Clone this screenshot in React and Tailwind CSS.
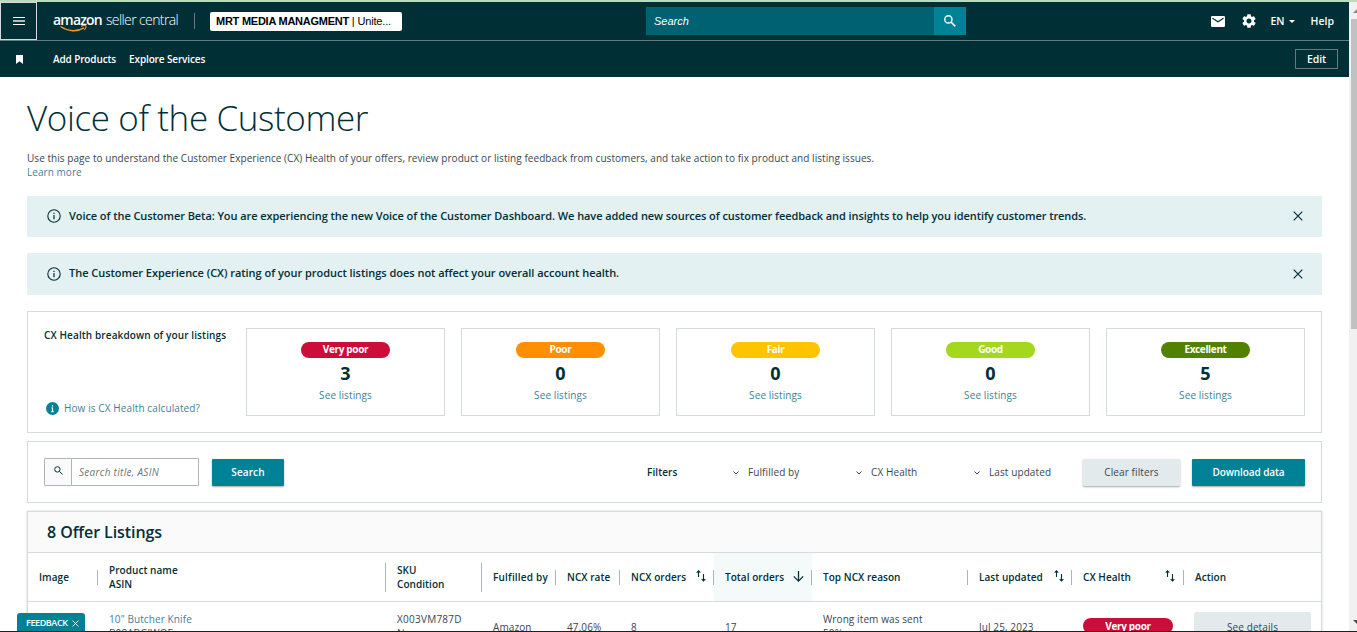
import React from "react";

const INFO_LINK = "text-[#3f8198]";

const RATINGS = [
  { label: "Very poor", count: 3, color: "bg-[#cc0c39]" },
  { label: "Poor", count: 0, color: "bg-[#ff8f00]" },
  { label: "Fair", count: 0, color: "bg-[#ffc400]" },
  { label: "Good", count: 0, color: "bg-[#a3d81f]" },
  { label: "Excellent", count: 5, color: "bg-[#508200]" },
];

const GRID =
  "grid grid-cols-[70px_288px_96px_74px_64px_94px_98px_156px_104px_112px_1fr]";

function SearchIcon({ className }) {
  return (
    <svg viewBox="0 0 12 12" className={className} fill="none" stroke="currentColor">
      <circle cx="4.4" cy="4.4" r="3.6" strokeWidth="1.4" />
      <path d="M7 7l4.3 4.3" strokeWidth="1.7" />
    </svg>
  );
}

function CloseIcon({ className }) {
  return (
    <svg viewBox="0 0 10 10" className={className} fill="none" stroke="currentColor" strokeWidth="1.2">
      <path d="M.7.7l8.600 8.600M9.300.7L.7 9.300" />
    </svg>
  );
}

function Chevron() {
  return (
    <svg viewBox="0 0 6 4" className="h-1 w-1.5" fill="none" stroke="#37474f">
      <path d="M.5.5L3 3 5.5.5" />
    </svg>
  );
}

function SortIcon() {
  return (
    <svg viewBox="0 0 10 12" className="mb-0.5 h-3 w-2.5 shrink-0" fill="none" stroke="#002f36" strokeWidth="1.1">
      <path d="M2.500 7V.8M.7 2.600L2.500.8l1.800 1.800M7.500 4v7M5.700 9.200L7.500 11l1.800-1.800" />
    </svg>
  );
}

function DownIcon() {
  return (
    <svg viewBox="0 0 11 11" className="mb-0.5 h-[11px] w-[11px] shrink-0" fill="none" stroke="#002f36" strokeWidth="1.3">
      <path d="M5.5 0v10M.8 5.4l4.7 4.7 4.7-4.7" />
    </svg>
  );
}

function Alert({ children, className }) {
  return (
    <div className={`flex items-center rounded-[1px] bg-[#e3f1f2] pb-px pl-[20px] pr-[19px] text-[#002f36] ${className}`}>
      <svg viewBox="0 0 14 14" className="h-[14px] w-[14px] shrink-0" fill="none" stroke="currentColor">
        <circle cx="7" cy="7" r="6.2" strokeWidth="1.1" />
        <path d="M7 6v4.200M7 3.800v1.200" strokeWidth="1.200" />
      </svg>
      <p className="ml-2 flex-1 whitespace-nowrap text-[11px] font-semibold">{children}</p>
      <CloseIcon className="h-[10px] w-[10px]" />
    </div>
  );
}

function Head({ children, bar = "h-[15px]", last, icon, className = "" }) {
  return (
    <div className={`flex h-12 items-center pl-[11px] ${className}`}>
      <div className="flex-1 whitespace-nowrap">{children}</div>
      {icon}
      {!last && <span className={`w-px shrink-0 bg-[#aab7b8] ${bar}`} />}
    </div>
  );
}

function Filter({ label, className }) {
  return (
    <div className={`flex items-center gap-[9px] whitespace-nowrap ${className}`}>
      <Chevron />
      {label}
    </div>
  );
}

function TopBar() {
  return (
    <div className="flex h-[39px] items-center border-b border-[#66797c]">
      <button className="flex h-[38px] w-[37px] shrink-0 flex-col items-center justify-center gap-[2px] border border-[#d5dbdb]">
        <span className="h-px w-3 bg-white" />
        <span className="h-[2px] w-3 bg-[#a9bcbe]" />
        <span className="h-px w-3 bg-white" />
      </button>
      <div className="relative ml-4 flex w-[128px] items-center gap-1 whitespace-nowrap pb-[3px] text-[14px] leading-none">
        <span className="font-semibold tracking-[-0.8px]">amazon</span>
        <span className="font-light tracking-[-0.6px]">seller central</span>
        <svg viewBox="0 0 27 7" className="absolute left-[7px] top-[12px] h-[7px] w-[27px]" fill="none" stroke="#f29a2e">
          <path d="M.5 1.5C8 6.600 17 7 24 2.800" strokeWidth="1.500" />
          <path d="M21 1.200c2-.8 4.400-.7 4.800-.2s-.2 2.500-1.500 4" strokeWidth="1.100" />
        </svg>
      </div>
      <span className="ml-[13px] h-4 w-px bg-[#66797c]" />
      <div className="ml-[15px] flex h-[19px] w-[192px] items-center whitespace-pre rounded-[2px] bg-white pl-[6px] font-['Liberation_Sans',sans-serif] text-[11px] tracking-[-0.16px] text-black">
        <b className="tracking-[-0.25px]">MRT MEDIA MANAGMENT</b> | Unite...
      </div>
      <div className="ml-[244px] flex h-7 w-[320px]">
        <div className="flex flex-1 items-center bg-[#006170] pl-2 font-['Liberation_Sans',sans-serif] text-[11px] italic">
          Search
        </div>
        <div className="flex w-8 items-center justify-center bg-[#008296]">
          <SearchIcon className="h-3 w-3" />
        </div>
      </div>
      <div className="ml-auto flex items-center pr-[15px] text-[10.5px] font-semibold">
        <svg viewBox="0 0 14 11" className="h-[11px] w-[14px]">
          <rect width="14" height="11" rx="1.2" fill="#fff" />
          <path d="M1.500 2.200L7 5.800l5.500-3.600" fill="none" stroke="#002f36" strokeWidth="1.200" />
        </svg>
        <svg viewBox="2 2 20 20" className="ml-[17px] h-[14px] w-[14px]" fill="#fff">
          <path d="M19.140 12.940c.040-.300.060-.610.060-.940 0-.320-.020-.640-.070-.940l2.030-1.580c.180-.140.230-.410.120-.610l-1.920-3.320c-.120-.220-.370-.290-.590-.220l-2.390.960c-.500-.380-1.030-.700-1.620-.940l-.360-2.540c-.040-.240-.240-.410-.480-.410h-3.840c-.240 0-.430.170-.470.410l-.360 2.540c-.590.240-1.130.570-1.620.940l-2.390-.960c-.220-.080-.470 0-.590.220L2.740 8.870c-.120.210-.080.470.120.610l2.030 1.580c-.050.300-.090.630-.090.940s.020.640.070.940l-2.030 1.580c-.180.140-.230.410-.120.610l1.920 3.320c.120.220.370.290.590.220l2.390-.960c.500.380 1.030.700 1.620.940l.360 2.540c.050.240.240.410.480.410h3.840c.240 0 .440-.170.470-.410l.360-2.540c.590-.240 1.130-.560 1.620-.940l2.390.960c.220.080.470 0 .590-.220l1.920-3.320c.120-.220.070-.470-.120-.610l-2.010-1.580zM12 15.600c-1.980 0-3.600-1.620-3.600-3.600s1.620-3.600 3.600-3.600 3.600 1.620 3.600 3.600-1.620 3.600-3.600 3.600z" />
        </svg>
        <span className="ml-[15px] pt-px">EN</span>
        <svg viewBox="0 0 6 3" className="ml-1 h-[3px] w-1.5" fill="#fff"><path d="M0 0h6L3 3z" /></svg>
        <span className="ml-4 pt-px">Help</span>
      </div>
    </div>
  );
}

function SubBar() {
  return (
    <div className="flex h-9 items-center pl-4 pr-[11px] text-[10px] font-semibold tracking-[-0.13px]">
      <svg viewBox="0 0 7 9" className="h-[9px] w-[7px]" fill="#fff"><path d="M0 0h7v9L3.500 6.300 0 9z" /></svg>
      <span className="ml-[30px] pt-px">Add Products</span>
      <span className="ml-[13px] pt-px">Explore Services</span>
      <button className="ml-auto h-5 w-[43px] border border-[#66797c] text-[10.5px] leading-none">Edit</button>
    </div>
  );
}

function Breakdown() {
  return (
    <section className="mt-4 flex h-[122px] shrink-0 border border-[#d5dbdb] p-4">
      <div className="flex w-[202px] shrink-0 flex-col justify-between">
        <h2 className="whitespace-nowrap text-[10px] font-semibold leading-[14px] tracking-[0.11px]">
          CX Health breakdown of your listings
        </h2>
        <div className={`flex items-center gap-[5px] whitespace-nowrap pl-[2px] text-[10px] tracking-[0.1px] ${INFO_LINK}`}>
          <svg viewBox="0 0 13 13" className="mb-px h-[13px] w-[13px]">
            <circle cx="6.500" cy="6.500" r="6.500" fill="#008296" />
            <path d="M6.500 5.500V10M6.500 3v1.500M5.500 5.900h1M5.300 9.600h2.400" stroke="#fff" strokeWidth="1.200" />
          </svg>
          How is CX Health calculated?
        </div>
      </div>
      <div className="flex flex-1 gap-4">
        {RATINGS.map((r) => (
          <div key={r.label} className="flex h-[88px] flex-1 flex-col items-center border border-[#d5dbdb] pt-[13px]">
            <span className={`h-4 w-[89px] rounded-full text-center text-[10px] font-bold leading-[15px] tracking-[-0.35px] text-white ${r.color}`}>
              {r.label}
            </span>
            <span className="mt-1 text-[18px] font-bold leading-[22px]">{r.count}</span>
            <a className={`mt-1 text-[10px] leading-[14px] tracking-[0.11px] ${INFO_LINK}`}>See listings</a>
          </div>
        ))}
      </div>
    </section>
  );
}

function Toolbar() {
  return (
    <section className="mt-2 flex h-[62px] shrink-0 items-center border border-[#d5dbdb] px-4 text-[10px] tracking-[0.1px] text-[#37474f]">
      <div className="flex h-7 w-[155px] rounded-[1px] border border-[#aab7b8]">
        <div className="flex w-[27px] items-center justify-center border-r border-[#aab7b8] bg-[#fafafa] pb-[3px] text-[#002f36]">
          <svg viewBox="0 0 9 9" className="h-[9px] w-[9px]" fill="none" stroke="currentColor">
            <circle cx="3.400" cy="3.400" r="2.700" />
            <path d="M5.400 5.400l3.100 3.100" />
          </svg>
        </div>
        <div className="flex flex-1 items-center pl-[7px] pt-px italic tracking-[0.3px] text-[#6c7778]">Search title, ASIN</div>
      </div>
      <button className="ml-[13px] h-[27px] w-[72px] rounded-[1px] bg-[#008296] pt-px font-semibold text-white shadow-[0_1px_2px_rgba(0,0,0,0.35)]">
        Search
      </button>
      <span className="ml-[363px] w-[86px] font-semibold text-[#002f36]">Filters</span>
      <Filter label="Fulfilled by" className="w-[123px] pt-px" />
      <Filter label="CX Health" className="w-[118px] pt-px" />
      <Filter label="Last updated" className="pt-px" />
      <button className="ml-auto h-[27px] w-[97px] rounded-[1px] bg-[#e2eaeb] pt-px shadow-[0_1px_2px_rgba(0,0,0,0.35)]">
        Clear filters
      </button>
      <button className="ml-[12px] h-[27px] w-[113px] rounded-[1px] bg-[#008296] pt-px font-semibold tracking-[-0.08px] text-white shadow-[0_1px_2px_rgba(0,0,0,0.35)]">
        Download data
      </button>
    </section>
  );
}

function Listings() {
  return (
    <section className="mt-2 shrink-0 border border-[#d5dbdb] shadow-[0_0_2px_rgba(0,0,0,0.2)]">
      <h2 className="flex h-[41px] items-center border-b border-[#d5dbdb] bg-[#fafafa] pl-[19px] text-[16px] font-semibold tracking-[-0.08px]">
        8 Offer Listings
      </h2>
      <div className={`${GRID} border-b border-[#d5dbdb] text-[10px] font-semibold leading-[14px] tracking-[0.05px]`}>
        <Head>Image</Head>
        <Head bar="h-[29px]">Product name<br />ASIN</Head>
        <Head bar="h-[29px]">SKU<br />Condition</Head>
        <Head><span className="tracking-[0.2px]">Fulfilled by</span></Head>
        <Head>NCX rate</Head>
        <Head icon={<span className="mr-[7px]"><SortIcon /></span>}>NCX orders</Head>
        <Head className="bg-[#f4f9fa]" icon={<span className="mr-[7px]"><DownIcon /></span>}>Total orders</Head>
        <Head>Top NCX reason</Head>
        <Head icon={<span className="mr-[7px]"><SortIcon /></span>}>Last updated</Head>
        <Head icon={<span className="mr-2"><SortIcon /></span>}>CX Health</Head>
        <Head last>Action</Head>
      </div>
      <div className={`${GRID} h-[60px] text-[10px] leading-[14px] tracking-[0.1px] text-[#37474f] *:pl-[11px]`}>
        <div />
        <div className="pt-[10px]"><a className={INFO_LINK}>10" Butcher Knife</a><br />B08ABGJWQF</div>
        <div className="pt-[10px] tracking-[0.25px]">X003VM787D<br />New</div>
        <div className="pt-[18px]">Amazon</div>
        <div className="pt-[18px]">47.06%</div>
        <div className="pt-[18px]">8</div>
        <div className="pt-[18px]">17</div>
        <div className="pt-[10px]">Wrong item was sent<br />50%</div>
        <div className="pt-[18px]">Jul 25, 2023</div>
        <div className="pt-4">
          <div className="h-4 w-[90px] rounded-full bg-[#cc0c39] text-center text-[10px] font-bold leading-[17px] tracking-[-0.35px] text-white">Very poor</div>
        </div>
        <div className="pt-[10px]">
          <div className="-ml-px h-7 w-[117px] rounded-[2px] bg-[#e2eaeb] text-center leading-[30px]">See details</div>
        </div>
      </div>
    </section>
  );
}

export default function App() {
  return (
    <div className="relative flex h-[632px] w-[1357px] overflow-hidden bg-white font-['Open_Sans','Noto_Sans',sans-serif] text-[#002f36]">
      <div className="flex w-[1349px] shrink-0 flex-col">
        <header className="shrink-0 border-t-2 border-[#b9dcbf] bg-[#002f36] text-white">
          <TopBar />
          <SubBar />
        </header>
        <main className="flex flex-col px-[27px]">
          <h1 className="mt-[17px] text-[35px] font-light leading-[48px] tracking-[-0.38px]">Voice of the Customer</h1>
          <p className="mt-[9px] whitespace-nowrap text-[10px] leading-[14px] tracking-[0.053px] text-[#37474f]">
            Use this page to understand the Customer Experience (CX) Health of your offers, review product or listing
            feedback from customers, and take action to fix product and listing issues.
            <br />
            <a className={INFO_LINK}>Learn more</a>
          </p>
          <Alert className="mt-[17px] h-[41px] tracking-[-0.07px]">
            Voice of the Customer Beta: You are experiencing the new Voice of the Customer Dashboard. We have added new
            sources of customer feedback and insights to help you identify customer trends.
          </Alert>
          <Alert className="mt-4 h-[42px] tracking-[-0.03px]">
            The Customer Experience (CX) rating of your product listings does not affect your overall account health.
          </Alert>
          <Breakdown />
          <Toolbar />
          <Listings />
        </main>
      </div>
      <aside className="flex w-2 shrink-0 flex-col items-end bg-[#f1f1f1]">
        <div className="h-[2px] w-full bg-[#b9dcbf]" />
        <svg viewBox="0 0 4 4" className="mt-[7px] h-1 w-1" fill="#8a8a8a"><path d="M0 4l4-4v4z" /></svg>
        <div className="mt-1.5 h-[310px] w-1.5 bg-[#c1c1c1]" />
        <svg viewBox="0 0 4 4" className="mb-2 mt-auto h-1 w-1" fill="#505050"><path d="M0 0h4v4z" /></svg>
      </aside>
      <button className="absolute left-[17px] top-[613px] flex h-[20px] w-[68px] items-center gap-1 rounded-t-[3px] bg-[#008296] pl-[9px] text-[9px] font-semibold tracking-[-0.4px] text-white">
        FEEDBACK
        <CloseIcon className="h-[7px] w-[7px]" />
      </button>
      <div className="absolute bottom-0 left-0 h-px w-full bg-[#202020]" />
    </div>
  );
}
